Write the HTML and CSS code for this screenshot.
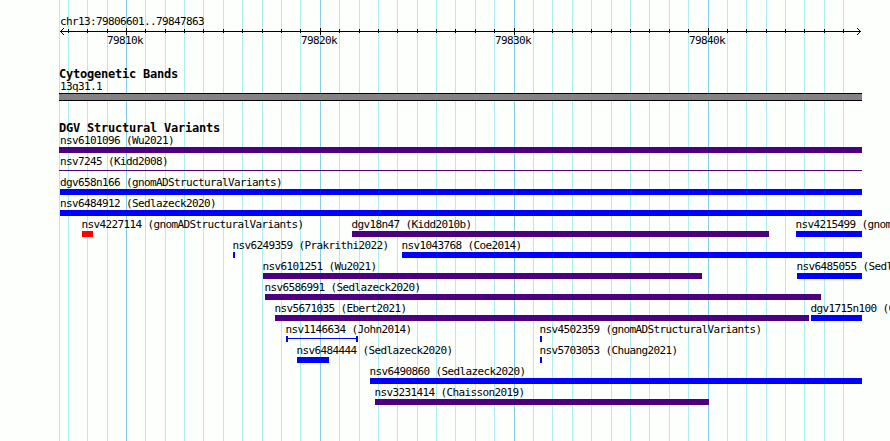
FILE: index.html
```
<!DOCTYPE html>
<html lang="en">
<head>
<meta charset="utf-8">
<title>chr13:79806601..79847863</title>
<link rel="stylesheet" href="styles.css">
</head>
<body>
<main class="browser">
  <svg class="gridlines" width="890" height="441" aria-hidden="true" shape-rendering="crispEdges">
    <path class="minor" d="M59.5 0V441M68.5 0V441M87.5 0V441M107.5 0V441M145.5 0V441M165.5 0V441M184.5 0V441M203.5 0V441M223.5 0V441M242.5 0V441M262.5 0V441M281.5 0V441M300.5 0V441M339.5 0V441M359.5 0V441M378.5 0V441M397.5 0V441M417.5 0V441M436.5 0V441M455.5 0V441M475.5 0V441M494.5 0V441M533.5 0V441M552.5 0V441M572.5 0V441M591.5 0V441M611.5 0V441M630.5 0V441M649.5 0V441M669.5 0V441M688.5 0V441M727.5 0V441M746.5 0V441M766.5 0V441M785.5 0V441M804.5 0V441M824.5 0V441M843.5 0V441"/>
    <path class="major" d="M126.5 0V441M320.5 0V441M514.5 0V441M708.5 0V441"/>
  </svg>

  <header class="ruler">
    <div class="label region">chr13:79806601..79847863</div>
    <svg class="axis" width="890" height="9" aria-hidden="true" shape-rendering="crispEdges">
      <path d="M60 4.5H861"/>
      <path d="M68.5 2V6M87.5 2V6M107.5 2V6M145.5 2V6M165.5 2V6M184.5 2V6M203.5 2V6M223.5 2V6M242.5 2V6M262.5 2V6M281.5 2V6M300.5 2V6M339.5 2V6M359.5 2V6M378.5 2V6M397.5 2V6M417.5 2V6M436.5 2V6M455.5 2V6M475.5 2V6M494.5 2V6M533.5 2V6M552.5 2V6M572.5 2V6M591.5 2V6M611.5 2V6M630.5 2V6M649.5 2V6M669.5 2V6M688.5 2V6M727.5 2V6M746.5 2V6M766.5 2V6M785.5 2V6M804.5 2V6M824.5 2V6M843.5 2V6"/>
      <path d="M126.5 1V8M320.5 1V8M514.5 1V8M708.5 1V8"/>
      <path d="M61 3.5h1M62 2.5h1M63 1.5h1M61 5.5h1M62 6.5h1M63 7.5h1M859 3.5h1M858 2.5h1M857 1.5h1M859 5.5h1M858 6.5h1M857 7.5h1"/>
    </svg>
    <div class="row scale">
      <span class="label tick" style="--x:107px">79810k</span>
      <span class="label tick" style="--x:301px">79820k</span>
      <span class="label tick" style="--x:495px">79830k</span>
      <span class="label tick" style="--x:689px">79840k</span>
    </div>
  </header>

  <section class="track bands">
    <h2>Cytogenetic Bands</h2>
    <div class="label region">13q31.1</div>
    <div class="band"></div>
  </section>

  <section class="track variants">
    <h2>DGV Structural Variants</h2>
    <div class="row">
      <div class="feature edge" style="--x:59px;--w:803px"><span class="label">nsv6101096 (Wu2021)</span><i class="bar both"></i></div>
    </div>
    <div class="row">
      <div class="feature edge" style="--x:59px;--w:803px"><span class="label">nsv7245 (Kidd2008)</span><i class="bar both line"></i></div>
    </div>
    <div class="row">
      <div class="feature inner" style="--x:60px;--w:802px"><span class="label">dgv658n166 (gnomADStructuralVariants)</span><i class="bar gain"></i></div>
    </div>
    <div class="row">
      <div class="feature inner" style="--x:60px;--w:802px"><span class="label">nsv6484912 (Sedlazeck2020)</span><i class="bar gain"></i></div>
    </div>
    <div class="row">
      <div class="feature" style="--x:82px;--w:11px"><span class="label">nsv4227114 (gnomADStructuralVariants)</span><i class="bar loss"></i></div>
      <div class="feature" style="--x:352px;--w:417px"><span class="label">dgv18n47 (Kidd2010b)</span><i class="bar both"></i></div>
      <div class="feature" style="--x:796px;--w:66px"><span class="label">nsv4215499 (gnomADStructuralVariants)</span><i class="bar gain"></i></div>
    </div>
    <div class="row">
      <div class="feature" style="--x:233px;--w:2px"><span class="label">nsv6249359 (Prakrithi2022)</span><i class="bar gain"></i></div>
      <div class="feature" style="--x:402px;--w:460px"><span class="label">nsv1043768 (Coe2014)</span><i class="bar gain"></i></div>
    </div>
    <div class="row">
      <div class="feature" style="--x:263px;--w:439px"><span class="label">nsv6101251 (Wu2021)</span><i class="bar both"></i></div>
      <div class="feature" style="--x:797px;--w:65px"><span class="label">nsv6485055 (Sedlazeck2020)</span><i class="bar gain"></i></div>
    </div>
    <div class="row">
      <div class="feature" style="--x:265px;--w:556px"><span class="label">nsv6586991 (Sedlazeck2020)</span><i class="bar both"></i></div>
    </div>
    <div class="row">
      <div class="feature" style="--x:275px;--w:534px"><span class="label">nsv5671035 (Ebert2021)</span><i class="bar both"></i></div>
      <div class="feature" style="--x:811px;--w:51px"><span class="label">dgv1715n100 (Coe2014)</span><i class="bar gain"></i></div>
    </div>
    <div class="row">
      <div class="feature" style="--x:286px;--w:72px"><span class="label">nsv1146634 (John2014)</span><i class="bar span"></i></div>
      <div class="feature" style="--x:540px;--w:2px"><span class="label">nsv4502359 (gnomADStructuralVariants)</span><i class="bar gain"></i></div>
    </div>
    <div class="row">
      <div class="feature" style="--x:297px;--w:32px"><span class="label">nsv6484444 (Sedlazeck2020)</span><i class="bar gain"></i></div>
      <div class="feature" style="--x:540px;--w:2px"><span class="label">nsv5703053 (Chuang2021)</span><i class="bar gain"></i></div>
    </div>
    <div class="row">
      <div class="feature" style="--x:370px;--w:492px"><span class="label">nsv6490860 (Sedlazeck2020)</span><i class="bar gain"></i></div>
    </div>
    <div class="row">
      <div class="feature" style="--x:375px;--w:334px"><span class="label">nsv3231414 (Chaisson2019)</span><i class="bar both"></i></div>
    </div>
  </section>
</main>
</body>
</html>
```
FILE: styles.css
```
body {
  margin: 0;
  background: #fdfffc;
  color: #000;
}

.browser {
  position: relative;
  width: 890px;
  height: 441px;
  overflow: hidden;
  font-family: "DejaVu Sans Mono", monospace;
}

.gridlines {
  position: absolute;
  inset: 0;
  z-index: -1;
}

.gridlines path,
.axis path {
  fill: none;
  stroke-width: 1;
}

.minor { stroke: #afeeee; }
.major { stroke: #87ceeb; }
.axis path { stroke: #000; }

.label {
  display: block;
  height: 15px;
  line-height: 17px;
  font-size: 11px;
  letter-spacing: -0.623px;
  white-space: nowrap;
}

.region { margin-left: 60px; }

.ruler { padding-top: 13px; }

.ruler .region { height: 14px; }

.axis { display: block; }

.row {
  display: grid;
  grid-template-columns: 890px;
}

.row > * {
  grid-area: 1 / 1;
  margin-left: var(--x);
}

.scale { margin-top: -4px; }

h2 {
  margin: 0 0 0 59px;
  height: 12px;
  line-height: 16px;
  font-size: 12px;
  font-weight: 700;
  letter-spacing: -0.225px;
}

.bands { padding-top: 19px; }

.band {
  box-sizing: border-box;
  width: 803px;
  height: 8px;
  margin-left: 59px;
  border: solid #000;
  border-width: 1px 0;
  background: #848284;
}

.variants { padding-top: 19px; }

.feature .label { margin-left: -0.6px; }
.edge .label { margin-left: 1px; }
.inner .label { margin-left: 0; }

.bar {
  display: block;
  box-sizing: border-box;
  width: var(--w);
  height: 6px;
}

.both { background: #4b0082; }
.gain { background: #00f; }
.loss { background: #f00; }

.line {
  height: 1px;
  margin: 2px 0 3px;
}

.span {
  border: solid #00f;
  border-width: 0 2px;
  background: linear-gradient(#00f, #00f) 0 2px / 100% 1px no-repeat;
}
```
